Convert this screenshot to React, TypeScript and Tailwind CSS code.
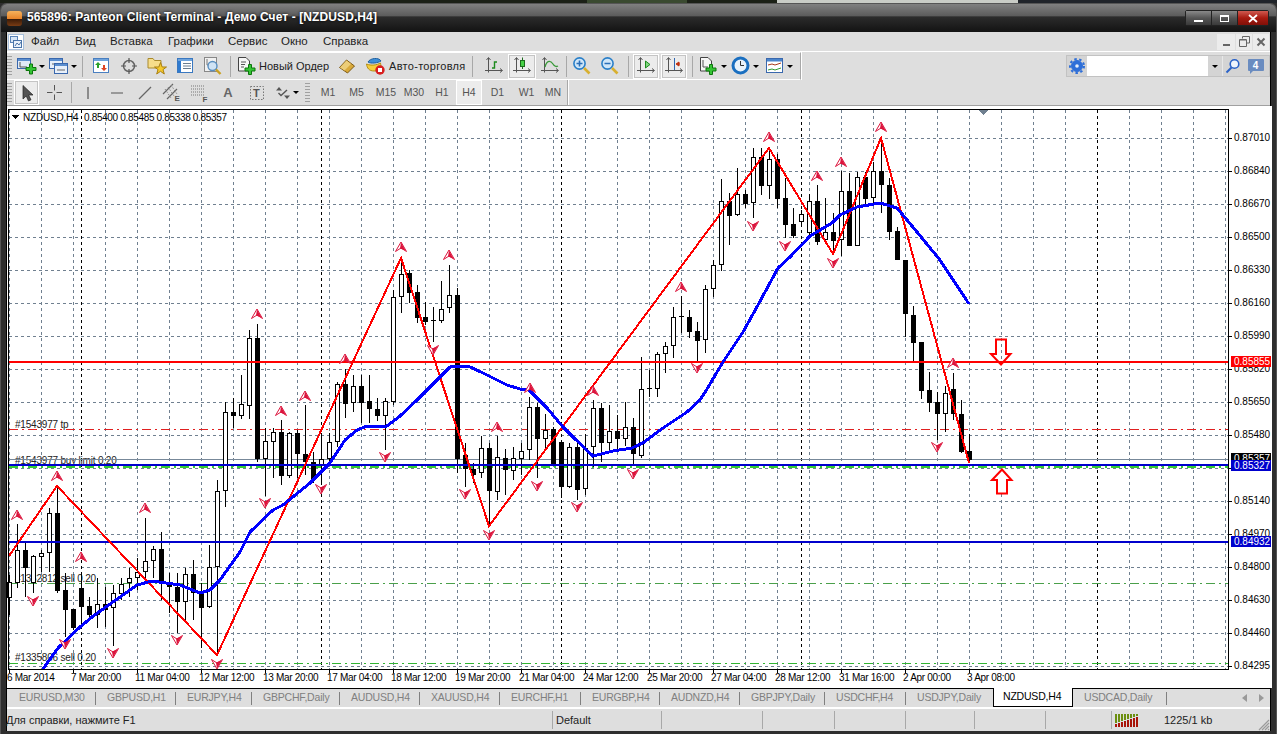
import React from "react";

type Candle = [number, number, number, number, number];

// high, body top, body bottom, low, black
const candles: Candle[] = [
  [575, 582, 598, 615, 0], [524, 550, 583, 588, 0], [543, 550, 568, 597, 1], [555, 556, 583, 593, 0],
  [550, 553, 557, 572, 0], [508, 513, 553, 572, 0], [487, 513, 591, 593, 1], [573, 590, 610, 637, 1],
  [609, 609, 628, 630, 1], [573, 588, 607, 627, 1], [597, 606, 615, 620, 1], [578, 604, 615, 628, 0],
  [587, 604, 610, 627, 1], [585, 593, 608, 646, 0], [578, 584, 594, 600, 0], [568, 578, 583, 597, 0],
  [558, 572, 578, 590, 0], [518, 561, 572, 582, 0], [546, 549, 561, 578, 0], [532, 549, 582, 600, 1],
  [573, 582, 587, 613, 1], [573, 587, 602, 633, 1], [568, 574, 602, 620, 0], [560, 574, 593, 620, 1],
  [583, 593, 608, 648, 1], [545, 567, 607, 608, 0], [480, 491, 567, 655, 0], [402, 412, 491, 507, 0],
  [398, 412, 416, 428, 1], [375, 404, 416, 419, 0], [330, 338, 406, 419, 0], [324, 338, 459, 462, 1],
  [428, 441, 459, 496, 0], [428, 432, 442, 478, 0], [420, 432, 476, 485, 1], [432, 433, 476, 478, 0],
  [430, 433, 454, 478, 1], [405, 454, 462, 475, 1], [452, 462, 480, 483, 1], [433, 459, 466, 483, 0],
  [433, 442, 459, 465, 0], [382, 384, 442, 447, 0], [369, 384, 404, 418, 1], [375, 386, 403, 412, 0],
  [375, 386, 403, 423, 1], [375, 401, 409, 423, 1], [398, 409, 416, 421, 1], [398, 401, 416, 450, 0],
  [290, 297, 402, 405, 0], [260, 274, 297, 313, 0], [270, 273, 293, 303, 1], [285, 292, 318, 323, 1],
  [302, 317, 322, 325, 1], [307, 320, 321, 342, 1], [281, 309, 321, 323, 0], [265, 295, 308, 313, 0],
  [288, 295, 459, 473, 1], [443, 455, 469, 487, 1], [463, 469, 475, 483, 1], [436, 448, 473, 478, 0],
  [443, 448, 491, 525, 1], [436, 457, 492, 500, 0], [449, 458, 470, 495, 1], [447, 458, 471, 480, 0],
  [443, 451, 459, 475, 0], [397, 407, 450, 460, 0], [403, 407, 439, 478, 1], [414, 430, 439, 450, 0],
  [427, 429, 464, 464, 1], [440, 442, 487, 498, 1], [443, 447, 487, 488, 0], [443, 447, 490, 500, 1],
  [434, 448, 489, 495, 0], [400, 408, 447, 467, 0], [403, 408, 443, 462, 1], [405, 431, 443, 452, 0],
  [415, 431, 439, 450, 1], [402, 427, 439, 446, 0], [418, 427, 454, 465, 1], [357, 389, 456, 458, 0],
  [370, 388, 389, 397, 1], [352, 354, 389, 397, 0], [342, 346, 354, 373, 0], [307, 317, 346, 358, 0],
  [296, 316, 317, 333, 1], [310, 317, 332, 338, 1], [322, 331, 341, 362, 1], [285, 289, 340, 353, 0],
  [260, 265, 289, 297, 0], [179, 201, 265, 271, 0], [193, 201, 216, 245, 1], [168, 194, 215, 216, 0],
  [190, 194, 204, 208, 1], [148, 157, 203, 218, 0], [148, 157, 186, 195, 1], [148, 159, 186, 199, 0],
  [154, 159, 199, 208, 1], [178, 198, 225, 238, 1], [208, 224, 236, 238, 1], [210, 214, 222, 226, 0],
  [194, 201, 233, 235, 0], [185, 201, 242, 245, 1], [198, 232, 240, 242, 0], [213, 232, 241, 253, 1],
  [171, 191, 240, 256, 0], [173, 191, 246, 246, 1], [172, 177, 246, 246, 0], [172, 177, 199, 205, 1],
  [162, 171, 198, 203, 0], [140, 171, 185, 213, 1], [178, 185, 232, 240, 1], [227, 231, 260, 260, 1],
  [260, 260, 314, 337, 1], [306, 315, 343, 362, 1], [342, 342, 391, 399, 1], [372, 390, 403, 412, 1],
  [392, 402, 414, 440, 1], [386, 393, 414, 432, 0], [373, 389, 414, 420, 1], [400, 414, 452, 453, 1],
  [434, 451, 460, 463, 1],
];

const maLine =
  "43,669 58,648 80,627 92,617 113,602 137,585 152,581 180,585 200,593 210,590 220,580 240,552 250,532 273,510 283,505 310,483 330,463 345,440 357,430 367,426 387,426 400,416 417,400 432,385 450,367 468,366 483,373 507,385 520,389 528,389 547,408 563,427 573,437 593,456 613,451 632,448 643,443 663,428 687,412 700,400 707,389 723,362 743,332 758,305 778,268 790,257 810,236 832,223 840,215 857,207 880,203 897,208 917,232 940,260 969,304";
const zigzag = "9,556 57,486 217,655 401,258 489,526 769,148 833,254 881,138 969,463";

const upMarks = [[17, 515], [57, 476], [81, 557], [145, 508], [257, 314], [281, 411], [305, 396], [345, 359], [401, 247], [449, 255], [497, 427], [530, 388], [593, 391], [681, 287], [769, 137], [817, 176], [841, 162], [881, 127], [953, 363]];
const downMarks = [[33, 601], [65, 644], [113, 653], [177, 640], [217, 664], [265, 503], [321, 489], [385, 457], [433, 350], [465, 494], [489, 535], [537, 486], [577, 507], [633, 474], [697, 368], [753, 226], [785, 246], [833, 263], [937, 447]];

const prices = ["0.87010", "0.86840", "0.86670", "0.86500", "0.86330", "0.86160", "0.85990", "0.85820", "0.85650", "0.85480", "0.85310", "0.85140", "0.84970", "0.84800", "0.84630", "0.84460", "0.84295"];
const times = ["6 Mar 2014", "7 Mar 20:00", "11 Mar 04:00", "12 Mar 12:00", "13 Mar 20:00", "17 Mar 04:00", "18 Mar 12:00", "19 Mar 20:00", "21 Mar 04:00", "24 Mar 12:00", "25 Mar 20:00", "27 Mar 04:00", "28 Mar 12:00", "31 Mar 16:00", "2 Apr 00:00", "3 Apr 08:00"];
const orders: [string, number][] = [["#1543977 tp", 428], ["#1543977 buy limit 0.20", 464], ["#1332812 sell 0.20", 582], ["#1335806 sell 0.20", 661]];
const breaks = [81, 321, 561, 801, 1097];

const tabs: [string, number][] = [["EURUSD,M30", 89], ["GBPUSD,H1", 80], ["EURJPY,H4", 76], ["GBPCHF,Daily", 88], ["AUDUSD,H4", 80], ["XAUUSD,H4", 80], ["EURCHF,H1", 81], ["EURGBP,H4", 79], ["AUDNZD,H4", 80], ["GBPJPY,Daily", 85], ["USDCHF,H4", 81], ["USDJPY,Daily", 87], ["NZDUSD,H4", 80], ["USDCAD,Daily", 94]];
const statusCells = [101, 72, 71, 69, 71, 66];

function Chart() {
  const right = 1228;
  return (
    <svg viewBox="7 106 1265 582" className="block w-[1265px] h-[582px] bg-white" shapeRendering="crispEdges" fontFamily="'Liberation Sans', Arial, sans-serif" fontSize="10">
      {/* grid */}
      {prices.map((_, i) => (
        <line key={i} x1={9} x2={right} y1={138.5 + 33 * i} y2={138.5 + 33 * i} stroke="#708090" strokeDasharray="3 3" />
      ))}
      {Array.from({ length: 39 }, (_, i) => 9 + 32 * i).map((x) => (
        <line key={x} x1={x + 0.5} x2={x + 0.5} y1={110} y2={669} stroke="#708090" strokeDasharray="3 3" />
      ))}
      {breaks.map((x) => (
        <line key={x} x1={x + 0.5} x2={x + 0.5} y1={110} y2={669} stroke="#000" strokeDasharray="3 3" />
      ))}

      {orders.map(([t, y]) => (
        <text key={t} x={15} y={y} fill="#222" letterSpacing="-0.2">{t}</text>
      ))}

      {/* order levels */}
      <line x1={9} x2={right} y1={429.5} y2={429.5} stroke="#e02020" strokeDasharray="9 4 2 4" />
      <line x1={9} x2={right} y1={583.5} y2={583.5} stroke="#4aa04a" strokeDasharray="9 4 2 4" />
      <line x1={9} x2={right} y1={663.5} y2={663.5} stroke="#32b432" strokeDasharray="9 4 2 4" />
      <line x1={9} x2={right} y1={467} y2={467} stroke="#32cd32" strokeWidth="2" strokeDasharray="9 4 2 4" />
      <line x1={9} x2={right} y1={459.5} y2={459.5} stroke="#778899" />

      {/* candles */}
      {candles.map(([h, t, b, l, f], k) => {
        const x = 9 + 8 * k;
        return (
          <g key={k}>
            <rect x={x} y={h} width={1} height={l - h} fill="#000" />
            {f ? (
              <rect x={x - 2} y={t} width={5} height={Math.max(b - t, 1)} fill="#000" />
            ) : (
              <rect x={x - 1.5} y={t + 0.5} width={4} height={Math.max(b - t - 1, 1)} fill="#fff" stroke="#000" />
            )}
          </g>
        );
      })}

      <line x1={9} x2={right} y1={362} y2={362} stroke="#ff0000" strokeWidth="2" />
      <line x1={9} x2={right} y1={465} y2={465} stroke="#0000cd" strokeWidth="2" />
      <line x1={9} x2={right} y1={542} y2={542} stroke="#0000cd" strokeWidth="2" />

      <polyline points={zigzag} fill="none" stroke="#ff0000" strokeWidth="2" />
      <polyline points={maLine} fill="none" stroke="#0000ff" strokeWidth="3" />

      <g shapeRendering="auto">
        {upMarks.map(([x, y]) => (
          <g key={`${x}-${y}`} transform={`translate(${x} ${y})`}>
            <path d="M0 -5L5.5 4.5L0 1L-5.5 4.5Z" fill="#fff" stroke="#dc143c" strokeWidth="1" />
            <path d="M0 -4.5L-1 1.5L4.5 3.5Z" fill="#dc143c" />
          </g>
        ))}
        {downMarks.map(([x, y]) => (
          <g key={`${x}-${y}`} transform={`translate(${x} ${y}) scale(1 -1)`}>
            <path d="M0 -5L5.5 4.5L0 1L-5.5 4.5Z" fill="#fff" stroke="#dc143c" strokeWidth="1" />
            <path d="M0 -4.5L-1 1.5L4.5 3.5Z" fill="#dc143c" />
          </g>
        ))}
        <path d="M996 339.5H1006V354H1010.5L1001 364.5L991 354H996Z" fill="#fff" fillOpacity="0" stroke="#ff0000" strokeWidth="2" />
        <path d="M997 493.5H1007V480H1011.5L1002 469.5L992 480H997Z" fill="#fff" stroke="#ff0000" strokeWidth="2" />
      </g>

      <path d="M978 110H988L983 115Z" fill="#708090" />

      {/* frame */}
      <rect x={8.5} y={109.5} width={1220} height={559.5} fill="none" stroke="#000" />
      <path d="M12 115H19L15.5 119Z" fill="#000" />
      <text x={23} y={121} fill="#000" letterSpacing="-0.2">NZDUSD,H4</text>
      <text x={84} y={121} fill="#000" letterSpacing="-0.33">0.85400 0.85485 0.85338 0.85357</text>

      {/* price axis */}
      {prices.map((p, i) => (
        <g key={p}>
          <rect x={1229} y={138 + 33 * i} width={3} height={1} fill="#000" />
          <text x={1234} y={141 + 33 * i} fill="#000">{p}</text>
        </g>
      ))}
      <rect x={1231} y={453} width={40} height={12} fill="#000" />
      <text x={1234} y={462} fill="#fff">0.85357</text>
      {[[356, "#ff0000", "0.85855"], [460, "#0000cd", "0.85327"], [536, "#0000cd", "0.84932"]].map(([y, c, t]) => (
        <g key={t as string}>
          <rect x={1231} y={y as number} width={40} height={11} fill={c as string} />
          <text x={1234} y={(y as number) + 9} fill="#fff">{t}</text>
        </g>
      ))}

      {/* time axis */}
      {times.map((t, i) => (
        <g key={t}>
          <rect x={9 + 64 * i} y={669} width={1} height={4} fill="#000" />
          <text x={7 + 64 * i} y={681} fill="#000" letterSpacing="-0.3">{t}</text>
        </g>
      ))}
    </svg>
  );
}

const Ic = ({ w = 20, h = 20, children }: { w?: number; h?: number; children: React.ReactNode }) => (
  <svg width={w} height={h} viewBox={`0 0 ${w} ${h}`} className="block shrink-0">{children}</svg>
);
const Plus = ({ x, y }: { x: number; y: number }) => (
  <path d={`M${x - 1.5} ${y - 5}h3v3.5h3.5v3h-3.5v3.5h-3v-3.5h-3.5v-3h3.5z`} fill="#35c435" stroke="#0c760c" />
);
const Caret = () => <span className="block w-0 h-0 border-x-[3.5px] border-x-transparent border-t-[3.5px] border-t-black" />;
const Axes = ({ c = "#555" }: { c?: string }) => (
  <path d="M4.5 2V16.5M1 14.5H18M2.5 4L4.5 1.5L6.5 4M16 12.5L18.5 14.5L16 16.5" fill="none" stroke={c} strokeWidth="1" />
);

const icons: Record<string, React.ReactNode> = {
  newChart: (
    <Ic w={20} h={20}>
      <rect x=".5" y="2.5" width="13" height="10" fill="#dfeaf8" stroke="#3a68ad" />
      <rect x="1" y="3" width="12" height="2" fill="#5c8fd0" />
      <path d="M3 6V11H10" fill="none" stroke="#555" />
      <Plus x={14} y={13} />
    </Ic>
  ),
  profiles: (
    <Ic w={20} h={20}>
      <rect x=".5" y="2.5" width="13" height="10" fill="#e8f0fa" stroke="#3a68ad" />
      <rect x="1" y="3" width="12" height="2" fill="#5c8fd0" />
      <rect x="5.5" y="7.5" width="13" height="10" fill="#e8f0fa" stroke="#3a68ad" />
      <rect x="6" y="8" width="12" height="2" fill="#5c8fd0" />
      <path d="M8 14H16M3 8H5" stroke="#666" />
    </Ic>
  ),
  market: (
    <Ic w={18} h={18}>
      <rect x="1.5" y="1.5" width="15" height="14" fill="#fff" stroke="#4a7fc0" />
      <rect x="2" y="2" width="14" height="2" fill="#6ea3dc" />
      <path d="M6 5L9 8H7V11H5V8H3Z" fill="#2aa02a" />
      <path d="M11 8H13V11H15L12 14L9 11H11Z" fill="#dd4422" />
    </Ic>
  ),
  cross: (
    <Ic w={18} h={18}>
      <circle cx="9" cy="9" r="5.5" fill="none" stroke="#666" strokeWidth="1.5" />
      <path d="M9 1V6M9 12V17M1 9H6M12 9H17" stroke="#555" strokeWidth="1.2" />
    </Ic>
  ),
  folder: (
    <Ic w={20} h={20}>
      <path d="M1 5L1 2.5H6L7.5 4.5H14V12H1Z" fill="#f6dd8a" stroke="#a98a2e" />
      <path d="M13.5 6.5L15.2 11H19.5L16 13.6L17.3 18L13.5 15.3L9.7 18L11 13.6L7.5 11H11.8Z" fill="#f5c92c" stroke="#a87f10" />
    </Ic>
  ),
  list: (
    <Ic w={18} h={18}>
      <rect x="1.5" y="1.5" width="15" height="14" fill="#fff" stroke="#3a78c0" />
      <rect x="2" y="2" width="14" height="2" fill="#6ea3dc" />
      <rect x="2" y="4" width="3" height="11" fill="#2f7bd0" />
      <path d="M7 6.5H15M7 9H15M7 11.5H15" stroke="#6b7d8f" />
    </Ic>
  ),
  tester: (
    <Ic w={20} h={20}>
      <rect x="1.5" y="1.5" width="12" height="14" fill="#f1f1f1" stroke="#888" />
      <path d="M4 3V9H9" fill="none" stroke="#777" />
      <circle cx="9.5" cy="10" r="4.5" fill="#cfe3f5" stroke="#5a8fc0" strokeWidth="1.4" />
      <path d="M13 13.5L17.5 18" stroke="#c9a020" strokeWidth="2.4" />
    </Ic>
  ),
  order: (
    <Ic w={19} h={20}>
      <path d="M1.5 1.5H9L12.5 5V15H1.5Z" fill="#f6f6f6" stroke="#444" />
      <path d="M4 6H9M4 8.5H8M4 11H7" stroke="#555" />
      <Plus x={13} y={13.5} />
    </Ic>
  ),
  book: (
    <Ic w={18} h={18}>
      <path d="M1.5 10.5L8.5 3L16.5 9L9.5 16Z" fill="#d9a93a" stroke="#7d5a14" />
      <path d="M2 10.5L8.5 3.5L13 7L6.5 13.5Z" fill="#eccd78" />
    </Ic>
  ),
  auto: (
    <Ic w={21} h={20}>
      <path d="M3 6C5 2 14 1 16 5C13 7 6 8 3 6Z" fill="#3d8fd8" stroke="#1e5f9e" />
      <path d="M1.5 8C6 10 12 9 15.5 7C16.5 11 15 15 9 15C4 15 2 12 1.5 8Z" fill="#f5cf3d" stroke="#b58f14" />
      <circle cx="15" cy="14" r="4.7" fill="#d81e1e" />
      <rect x="13" y="12" width="4" height="4" fill="#fff" />
    </Ic>
  ),
  bar: (
    <Ic>
      <Axes />
      <path d="M8 12H10.5V6H13" fill="none" stroke="#1d8a1d" strokeWidth="1.4" />
    </Ic>
  ),
  candle: (
    <Ic>
      <Axes />
      <path d="M10.5 1.5V13" stroke="#1d6a1d" />
      <rect x="8.5" y="4.5" width="4" height="6" fill="#46d146" stroke="#1d6a1d" />
    </Ic>
  ),
  line: (
    <Ic>
      <Axes />
      <path d="M5 11C7 3 11 5 13 8C14 10 16 11 18 10" fill="none" stroke="#3a9a3a" strokeWidth="1.3" />
    </Ic>
  ),
  zoomIn: (
    <Ic>
      <circle cx="7.5" cy="7.5" r="5.6" fill="#cfe6f8" stroke="#2a7fc8" strokeWidth="1.6" />
      <path d="M4.5 7.5H10.5M7.5 4.5V10.5" stroke="#2a6fb8" strokeWidth="1.6" />
      <path d="M12 12L17.5 17.5" stroke="#d8b030" strokeWidth="2.6" />
    </Ic>
  ),
  zoomOut: (
    <Ic>
      <circle cx="7.5" cy="7.5" r="5.6" fill="#cfe6f8" stroke="#2a7fc8" strokeWidth="1.6" />
      <path d="M4.5 7.5H10.5" stroke="#2a6fb8" strokeWidth="1.6" />
      <path d="M12 12L17.5 17.5" stroke="#d8b030" strokeWidth="2.6" />
    </Ic>
  ),
  scroll: (
    <Ic>
      <Axes />
      <path d="M9.5 5L14 8.5L9.5 12Z" fill="#7fd77f" stroke="#1d8a1d" />
    </Ic>
  ),
  shift: (
    <Ic>
      <Axes />
      <path d="M10.5 2V14" stroke="#2f66b0" />
      <path d="M16 8H13M15 6L12 8L15 10Z" fill="#c03010" stroke="#c03010" />
    </Ic>
  ),
  add: (
    <Ic>
      <path d="M1.5 1.5H9L12.5 5V15H1.5Z" fill="#f6f6f6" stroke="#444" />
      <path d="M4 4V11H9" fill="none" stroke="#555" />
      <Plus x={12} y={13.5} />
    </Ic>
  ),
  clock: (
    <Ic>
      <circle cx="9.5" cy="9.5" r="7.5" fill="#e9f3fb" stroke="#1a6fc0" strokeWidth="3" />
      <path d="M9.5 5V9.5H13" fill="none" stroke="#333" />
    </Ic>
  ),
  template: (
    <Ic>
      <rect x="1.5" y="2.5" width="16" height="14" fill="#fff" stroke="#3a68ad" />
      <rect x="2" y="3" width="15" height="2.5" fill="#4a85cc" />
      <path d="M3 9L7 8L10 9L16 7" fill="none" stroke="#a83a1a" />
      <path d="M3 14L7 13L10 14L16 12" fill="none" stroke="#2f9a2f" />
    </Ic>
  ),
  pointer: (
    <Ic w={16} h={18}>
      <path d="M4 1.5V15L7.2 12L9.5 17L12 15.8L9.6 11H14Z" fill="#555" stroke="#222" strokeWidth=".7" />
    </Ic>
  ),
  thinCross: (
    <Ic w={17} h={17}>
      <path d="M8.5 1V6.5M8.5 10.5V16M1 8.5H6.5M10.5 8.5H16" stroke="#555" />
    </Ic>
  ),
  vline: (
    <Ic w={6} h={16}>
      <path d="M3 2V14" stroke="#555" strokeWidth="1.2" />
    </Ic>
  ),
  hline: (
    <Ic w={14} h={6}>
      <path d="M1 3H13" stroke="#555" strokeWidth="1.2" />
    </Ic>
  ),
  trend: (
    <Ic w={16} h={16}>
      <path d="M2 14L14 2" stroke="#666" strokeWidth="1.2" />
    </Ic>
  ),
  channel: (
    <Ic w={20} h={20}>
      <path d="M1 11L11 1M5 16L15 6" stroke="#666" strokeWidth="1.2" />
      <path d="M3 6L9 15M6 4L12 13M9 2L15 11" stroke="#888" strokeDasharray="1.5 1.5" />
      <text x="12.5" y="18" fontSize="8" fontWeight="700" fill="#555" fontFamily="'Liberation Sans', sans-serif">E</text>
    </Ic>
  ),
  fibo: (
    <Ic w={20} h={20}>
      <path d="M1 3H14M1 6H14M1 9H14M1 12H14" stroke="#777" strokeDasharray="1 1" />
      <text x="12.5" y="19" fontSize="8" fontWeight="700" fill="#555" fontFamily="'Liberation Sans', sans-serif">F</text>
    </Ic>
  ),
  textBox: (
    <Ic w={16} h={16}>
      <rect x="1.5" y="1.5" width="13" height="13" fill="none" stroke="#777" strokeDasharray="1.5 1.5" />
      <text x="4" y="12" fontSize="11" fontWeight="700" fill="#555" fontFamily="'Liberation Sans', sans-serif">T</text>
    </Ic>
  ),
  arrows: (
    <Ic w={16} h={14}>
      <path d="M4 1L7 4.5H1Z" fill="#555" />
      <path d="M12 13L15 9.5H9Z" fill="#555" />
      <path d="M3.5 7L6 9.5L12 4" fill="none" stroke="#555" strokeWidth="1.4" />
    </Ic>
  ),
};

function Slot({ w, name, on, caret }: { w: number; name?: string; on?: boolean; caret?: boolean }) {
  return (
    <div className={`flex items-center justify-center gap-[2px] shrink-0 h-[25px] ${on ? "bg-[#ececec] border border-white outline outline-1 outline-[#c4c4c4] -outline-offset-2" : ""}`} style={{ width: w }}>
      {name && icons[name]}
      {caret && <Caret />}
    </div>
  );
}
const Sep = ({ w = 8 }: { w?: number }) => (
  <div className="flex justify-center shrink-0" style={{ width: w }}>
    <div className="w-px h-[21px] bg-[#a8a8a8]" />
  </div>
);
const Grip = () => (
  <div className="w-[5px] h-[20px] shrink-0 mr-[2px] bg-[repeating-linear-gradient(#a0a0a0_0_1px,transparent_1px_3px)]" />
);
const Tf = ({ t, w, on }: { t: string; w: number; on?: boolean }) => (
  <div className={`flex items-center justify-center shrink-0 h-[25px] text-[10.5px] text-[#555] ${on ? "bg-[#ececec] border border-white" : ""}`} style={{ width: w }}>{t}</div>
);

export default function App() {
  return (
    <div className="w-[1277px] h-[734px] overflow-hidden flex flex-col bg-[#2e2e2e] text-[11px] text-[#222] font-['Liberation_Sans',Arial,sans-serif]">
      <div className="h-[3px] flex shrink-0">
        <div className="w-[587px] bg-[#1b2016]" />
        <div className="w-[100px] bg-[#3a4a30]" />
        <div className="w-[90px] bg-[#1b2016]" />
        <div className="w-[241px] bg-[#c9ccc6]" />
        <div className="flex-1 bg-[#20242a]" />
      </div>
      <div className="flex-1 flex flex-col rounded-t-[7px] border border-b-0 border-[#555] overflow-hidden">
        {/* title bar */}
        <div className="h-[28px] shrink-0 flex items-center bg-[linear-gradient(#808080_0%,#5a5a5a_44%,#2c2c2c_45%,#131313_100%)]">
          <div className="w-[15px] h-[15px] ml-[6px] rounded-[3px] bg-[linear-gradient(#f6b25c_0%,#e8862c_50%,#3c1c08_55%,#7a3c14_100%)]" />
          <span className="ml-[5px] -mt-[2px] text-[12px] font-bold text-white tracking-[0.1px] [text-shadow:0_0_3px_#000]">565896: Panteon Client Terminal - Демо Счет - [NZDUSD,H4]</span>
          <div className="ml-auto mr-[7px] flex items-stretch h-[16px] rounded-[2px] border border-[#222]">
            <div className="w-[26px] flex items-center justify-center bg-[linear-gradient(#8a8a8a,#555_50%,#3a3a3a)] border-r border-[#222]"><div className="w-[9px] h-[2px] mt-[5px] bg-white" /></div>
            <div className="w-[26px] flex items-center justify-center bg-[linear-gradient(#8a8a8a,#555_50%,#3a3a3a)] border-r border-[#222]"><div className="w-[9px] h-[7px] border border-t-2 border-white" /></div>
            <div className="w-[30px] flex items-center justify-center bg-[linear-gradient(#d05a50,#a81a10_50%,#801008)]">
              <svg width="10" height="9" viewBox="0 0 10 9"><path d="M1 1L9 8M9 1L1 8" stroke="#fff" strokeWidth="1.8" /></svg>
            </div>
          </div>
        </div>

        <div className="flex-1 flex flex-col mx-[5px] mb-[3px] border-x border-black bg-[#dedede] min-h-0">
          {/* menu */}
          <div className="h-[20px] shrink-0 flex items-center relative border-b border-white">
            <svg width="16" height="16" viewBox="0 0 16 16" className="ml-[1px] shrink-0">
              <rect x=".5" y=".5" width="15" height="15" fill="#fff" stroke="#a8c0dc" />
              <rect x="2.5" y="2.5" width="7" height="6" fill="#d8e6f6" stroke="#5a84b8" />
              <rect x="5.5" y="6.5" width="8" height="7" fill="#e8f0fa" stroke="#4a74a8" />
              <path d="M7 12L9 9L11 11L13 8" fill="none" stroke="#4a74a8" />
            </svg>
            <div className="flex text-[11.5px]">
              {[["Файл", 44], ["Вид", 35], ["Вставка", 58], ["Графики", 60], ["Сервис", 53], ["Окно", 42], ["Справка", 60]].map(([t, w], i) => (
                <span key={t} className={i === 0 ? "ml-[7px]" : ""} style={{ width: w as number }}>{t}</span>
              ))}
            </div>
            <div className="ml-auto flex items-center gap-px mr-px">
              <div className="w-[18px] h-[16px] bg-[#ececec] flex items-center justify-center"><div className="w-[7px] h-[2px] mt-[6px] bg-[#666]" /></div>
              <div className="w-[16px] h-[16px] bg-[#ececec] flex items-center justify-center">
                <svg width="11" height="11" viewBox="0 0 11 11"><path d="M3.5 2.5V.5H10.5V7H8M.5 3.5H7.5V10.5H.5Z" fill="none" stroke="#666" /><path d="M1 4H7" stroke="#666" /></svg>
              </div>
              <div className="w-[16px] h-[16px] bg-[#ececec] flex items-center justify-center">
                <svg width="10" height="10" viewBox="0 0 10 10"><path d="M1.5 1.5L8.5 8.5M8.5 1.5L1.5 8.5" stroke="#666" strokeWidth="2" /></svg>
              </div>
            </div>
          </div>

          {/* main toolbar */}
          <div className="h-[28px] shrink-0 flex items-center relative">
            <div className="w-[794px] h-[28px] flex items-center border-r border-r-[#a8a8a8] border-b border-b-white shadow-[1px_0_0_#fff] border-t border-t-white">
              <Grip />
              <Slot w={33} name="newChart" caret />
              <Slot w={31} name="profiles" caret />
              <Sep w={9} />
              <Slot w={28} name="market" />
              <Slot w={28} name="cross" />
              <Slot w={28} name="folder" />
              <Slot w={28} name="list" />
              <Slot w={28} name="tester" />
              <Sep w={6} />
              <Slot w={26} name="order" />
              <span className="w-[73px] text-[11px] whitespace-nowrap shrink-0">Новый Ордер</span>
              <Slot w={30} name="book" />
              <Slot w={27} name="auto" />
              <span className="w-[76px] text-[11px] tracking-[0.3px] whitespace-nowrap shrink-0">Авто-торговля</span>
              <Sep w={15} />
              <Slot w={28} name="bar" />
              <Slot w={28} name="candle" on />
              <Slot w={28} name="line" />
              <Sep w={4} />
              <Slot w={28} name="zoomIn" />
              <Slot w={28} name="zoomOut" />
              <Sep w={9} />
              <Slot w={26} name="scroll" on />
              <div className="w-[2px]" />
              <Slot w={26} name="shift" on />
              <Sep w={10} />
              <Slot w={31} name="add" caret />
              <Slot w={34} name="clock" caret />
              <Slot w={34} name="template" caret />
            </div>
            <div className="ml-auto h-[22px] flex items-stretch border border-[#c2c2c2] bg-[#d4d4d4]">
              <div className="w-[20px] flex items-center justify-center">
                <svg width="16" height="16" viewBox="0 0 16 16"><circle cx="8" cy="8" r="5.5" fill="#2f6fd8" stroke="#2f6fd8" /><circle cx="8" cy="8" r="7" fill="none" stroke="#2f6fd8" strokeWidth="2" strokeDasharray="2.5 2.5" /><circle cx="8" cy="8" r="1.8" fill="#e8f0fa" /></svg>
              </div>
              <div className="w-[121px] bg-white" />
              <div className="w-[14px] flex items-center justify-center"><Caret /></div>
              <div className="w-[19px] flex items-center justify-center border-l border-[#e8e8e8]">
                <svg width="15" height="16" viewBox="0 0 15 16"><circle cx="9.5" cy="6" r="4.3" fill="#eef4fc" stroke="#2a62c8" strokeWidth="1.6" /><path d="M6.5 9.5L1.5 14.5" stroke="#2a62c8" strokeWidth="2" /></svg>
              </div>
              <div className="w-[27px] flex items-center justify-center ml-px">
                <div className="relative w-[16px] h-[12px] mb-[2px] bg-[#6a8cc0] rounded-[1px] flex items-center justify-center text-white font-bold text-[10px]">
                  4
                  <span className="absolute -bottom-[3px] left-[2px] w-0 h-0 border-l-[3px] border-l-[#6a8cc0] border-b-[3px] border-b-transparent" />
                </div>
              </div>
            </div>
          </div>

          {/* drawing toolbar */}
          <div className="h-[26px] shrink-0 flex items-center border-b border-b-[#a0a0a0] bg-[#dedede]">
            <div className="w-[561px] h-[25px] flex items-center border-r border-r-[#a8a8a8] shadow-[1px_0_0_#fff]">
              <Grip />
              <Slot w={25} name="pointer" on />
              <Slot w={30} name="thinCross" />
              <Sep w={5} />
              <Slot w={27} name="vline" />
              <Slot w={31} name="hline" />
              <Slot w={26} name="trend" />
              <Slot w={28} name="channel" />
              <Slot w={28} name="fibo" />
              <div className="w-[28px] flex items-center justify-center shrink-0 text-[13px] font-bold text-[#666]">A</div>
              <Slot w={29} name="textBox" />
              <Slot w={31} name="arrows" caret />
              <div className="w-[13px] flex justify-center"><Grip /></div>
              <Tf t="M1" w={26} />
              <Tf t="M5" w={31} />
              <Tf t="M15" w={28} />
              <Tf t="M30" w={28} />
              <Tf t="H1" w={28} />
              <Tf t="H4" w={26} on />
              <Tf t="D1" w={31} />
              <Tf t="W1" w={27} />
              <Tf t="MN" w={26} />
            </div>
          </div>

          <Chart />

          {/* symbol tabs */}
          <div className="h-[21px] shrink-0 flex items-stretch border-t border-black text-[10.5px] tracking-[-0.2px] border-b-2 border-b-white">
            {tabs.map(([t, w], i) => {
              const active = t === "NZDUSD,H4";
              return (
                <div
                  key={t}
                  className={active ? "bg-white text-black border-x border-b border-black -mt-px pl-[9px] flex items-center" : i === 0 ? "text-[#808080] flex items-center pl-[12px]" : "text-[#808080] flex items-center pl-[11px]"}
                  style={{ width: w }}
                >
                  <span className="flex-1">{t}</span>
                  {!active && tabs[i + 1]?.[0] !== "NZDUSD,H4" && <span className="w-px h-[13px] bg-[#808080]" />}
                </div>
              );
            })}
            <div className="ml-auto flex items-center gap-[10px] pr-[6px] text-[#999]">
              <svg width="6" height="8" viewBox="0 0 6 8"><path d="M5 0V8L0 4Z" fill="#999" /></svg>
              <svg width="6" height="8" viewBox="0 0 6 8"><path d="M1 0V8L6 4Z" fill="#999" /></svg>
            </div>
          </div>

          {/* status bar */}
          <div className="flex-1 flex items-center relative min-h-0">
            <div className="w-[545px] -ml-px mr-px shrink-0 text-[11px]">Для справки, нажмите F1</div>
            <div className="w-[109px] h-[18px] flex items-center pl-[3px] border-l border-[#a8a8a8] shrink-0">Default</div>
            {statusCells.map((w, i) => (
              <div key={i} className="h-[18px] border-l border-[#a8a8a8] shrink-0" style={{ width: w }} />
            ))}
            <div className="h-[18px] border-l border-[#a8a8a8] pl-[3px] flex items-center gap-[25px]">
              <svg width="24" height="13" viewBox="0 0 24 13" shapeRendering="crispEdges">
                {Array.from({ length: 8 }, (_, b) => (
                  <g key={b}>
                    <rect x={b * 3} y={0} width={2} height={9 - b} fill="#6b8e10" />
                    <rect x={b * 3} y={10 - b} width={2} height={3 + b} fill="#a81408" />
                  </g>
                ))}
              </svg>
              <span>1225/1 kb</span>
            </div>
            <svg width="12" height="12" viewBox="0 0 12 12" className="absolute right-0 bottom-0">
              <path d="M11 1L1 11M11 4L4 11M11 7L7 11M11 10L10 11" stroke="#9a9a9a" strokeWidth="1.2" />
            </svg>
          </div>
        </div>
      </div>
    </div>
  );
}
